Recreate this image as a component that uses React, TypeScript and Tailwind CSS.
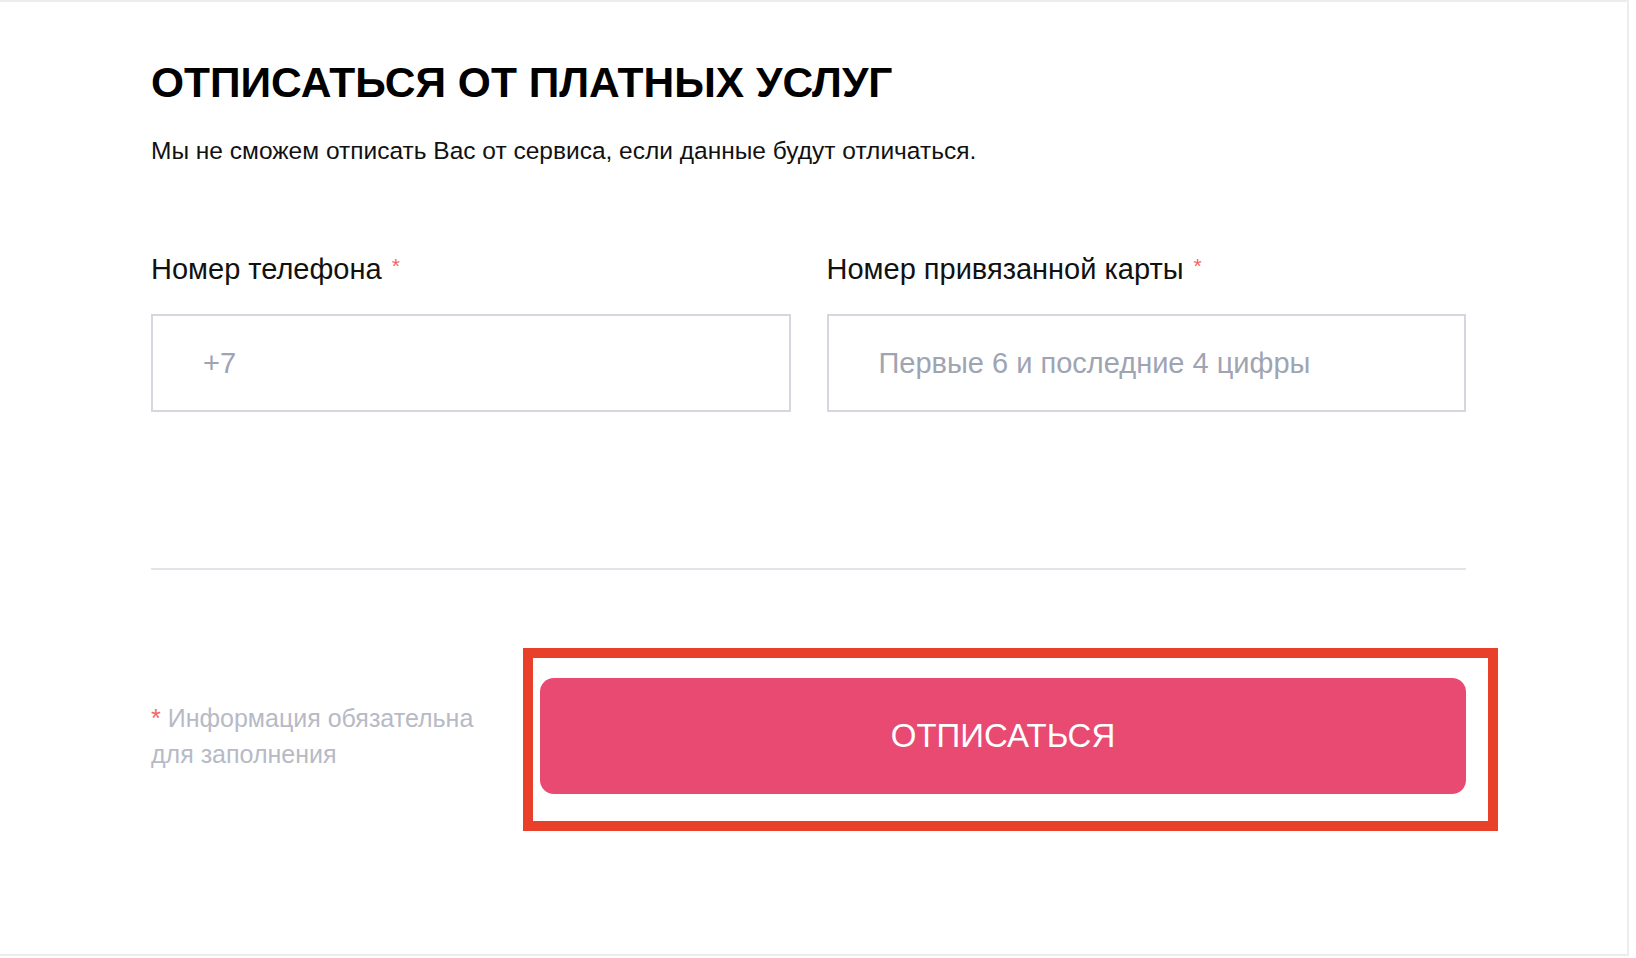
import React from "react";

const font = { fontFamily: '"Liberation Sans", Arial, sans-serif' };

interface FieldProps {
  label: string;
  placeholder: string;
  inputMode?: "tel" | "numeric";
}

const Field: React.FC<FieldProps> = ({ label, placeholder, inputMode }) => (
  <label className="flex flex-col">
    <span className="text-[29px] leading-[29px] text-[#111111]">
      {label}
      <span className="ml-[10px] align-top text-[21px] leading-[21px] text-[#f2665f]">*</span>
    </span>
    <input
      type="text"
      inputMode={inputMode}
      placeholder={placeholder}
      className="mt-[30px] h-[98px] w-full border-2 border-[#d5d6de] bg-white pl-[50px] text-[29px] text-[#111111] outline-none placeholder:text-[#9fa4b2]"
    />
  </label>
);

export default function App() {
  return (
    <div style={font} className="min-h-[958px] bg-white">
      <div className="h-[956px] w-[1629px] border-t-2 border-r-2 border-b-2 border-[#ededed] bg-white pl-[151px]">
        <div className="w-[1315px]">
          <h1 className="pt-[59px] text-[42.5px] font-bold leading-[43px] text-black">
            ОТПИСАТЬСЯ ОТ ПЛАТНЫХ УСЛУГ
          </h1>
          <p className="mt-[35px] text-[24.5px] leading-[24px] text-[#111111]">
            Мы не сможем отписать Вас от сервиса, если данные будут отличаться.
          </p>

          <form className="mt-[92px]" onSubmit={(e) => e.preventDefault()}>
            <div className="grid grid-cols-2 gap-[36px]">
              <Field label="Номер телефона" placeholder="+7" inputMode="tel" />
              <Field label="Номер привязанной карты" placeholder="Первые 6 и последние 4 цифры" inputMode="numeric" />
            </div>

            <div className="mt-[156px] h-[2px] bg-[#e3e3ea]" />

            <div className="mt-[108px] flex items-center">
              <p className="w-[360px] text-[25px] leading-[36px] text-[#b7bac6]">
                <span className="text-[#f2665f]">*</span> Информация обязательна для заполнения
              </p>
              <div className="relative ml-auto">
                <span className="pointer-events-none absolute -top-[30px] -right-[32px] -bottom-[37px] -left-[17px] border-[10px] border-[#e8402a]" />
                <button
                  type="submit"
                  className="relative flex h-[116px] w-[926px] items-center justify-center rounded-[14px] bg-[#e84a72] text-[33px] text-white"
                >
                  ОТПИСАТЬСЯ
                </button>
              </div>
            </div>
          </form>
        </div>
      </div>
    </div>
  );
}
